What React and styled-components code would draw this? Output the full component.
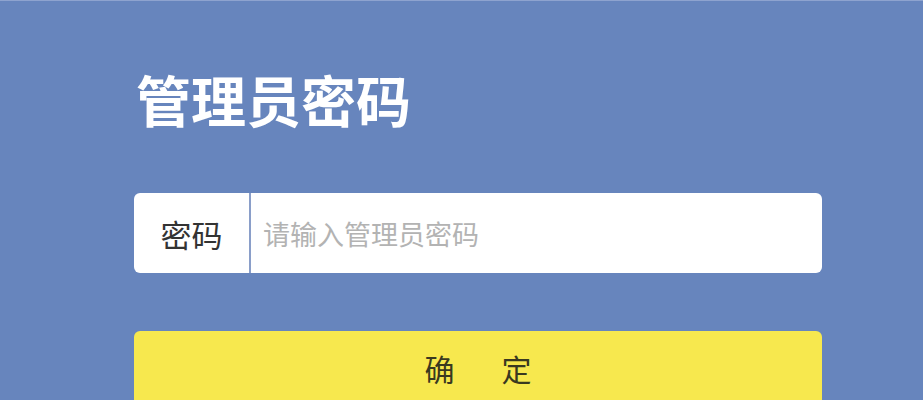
import styled, { createGlobalStyle } from 'styled-components';

const GlobalStyle = createGlobalStyle`
  html, body {
    margin: 0;
    padding: 0;
    background-color: #6785bd;
  }

  body {
    font-family: 'Noto Sans CJK SC', 'Noto Sans', sans-serif;
  }
`;

const Page = styled.div`
  height: 400px;
  overflow: hidden;
  border-top: 1px solid #8ea3cf;
  box-sizing: border-box;
`;

const Panel = styled.div`
  width: 688px;
  margin-left: 134px;
  padding-top: 58px;
  display: flex;
  flex-direction: column;
`;

const Title = styled.h1`
  margin: 0 0 0 2px;
  color: #fff;
  font-size: 55px;
  font-weight: 700;
  line-height: 78px;
  letter-spacing: 0;
`;

const Field = styled.label`
  margin-top: 56px;
  height: 80px;
  display: flex;
  align-items: stretch;
  background-color: #fff;
  border-radius: 6px;
  overflow: hidden;
`;

const FieldLabel = styled.span`
  width: 115px;
  flex-shrink: 0;
  display: flex;
  align-items: center;
  justify-content: center;
  color: #333;
  font-size: 31px;
  border-right: 2px solid #8a9ec9;
`;

const FieldInput = styled.input`
  flex: 1;
  border: none;
  outline: none;
  padding: 0 0 0 12px;
  font-family: inherit;
  font-size: 27px;
  color: #333;
  background: transparent;

  &::placeholder {
    color: #b3b3b3;
  }
`;

const SubmitButton = styled.button`
  margin-top: 58px;
  height: 74px;
  border: none;
  border-radius: 6px;
  background-color: #f7e84e;
  color: #3a3920;
  font-family: inherit;
  font-size: 30px;
  letter-spacing: 47px;
  padding: 0 0 0 47px;
  cursor: pointer;
`;

const App = () => {
  return (
    <Page>
      <GlobalStyle />
      <Panel>
        <Title>管理员密码</Title>
        <Field>
          <FieldLabel>密码</FieldLabel>
          <FieldInput type="password" placeholder="请输入管理员密码" />
        </Field>
        <SubmitButton>确定</SubmitButton>
      </Panel>
    </Page>
  );
};

export default App;
